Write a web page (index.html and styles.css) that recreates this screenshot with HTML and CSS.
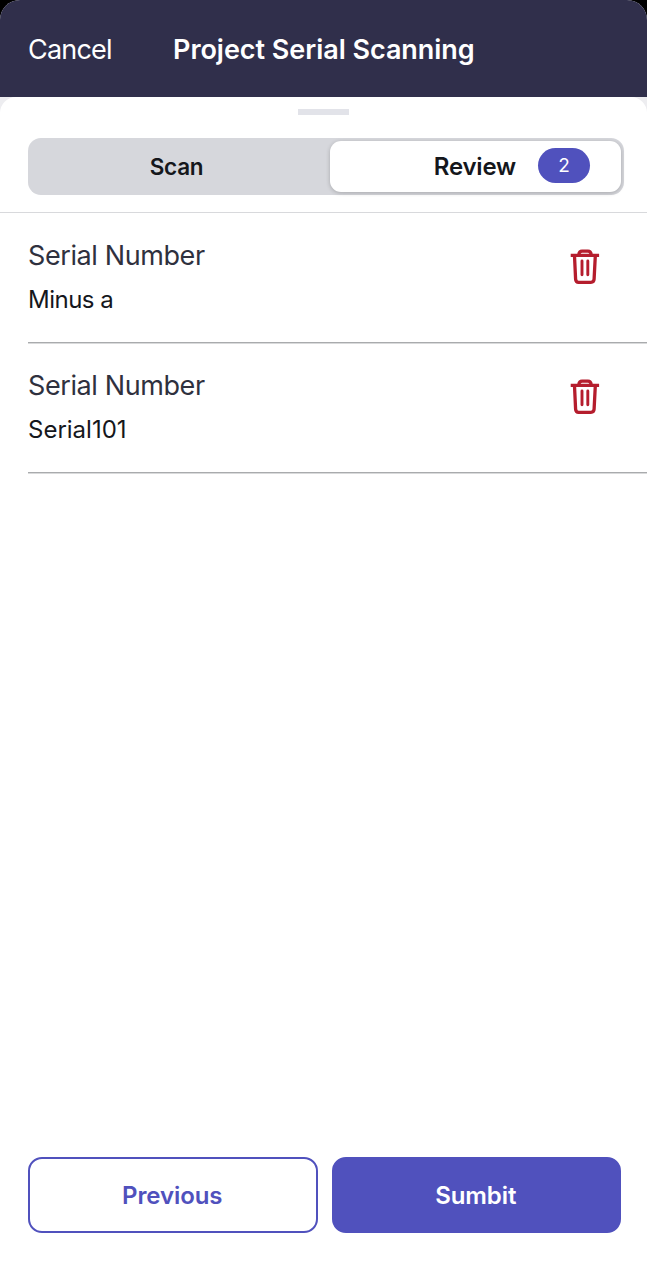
FILE: index.html
```html
<!DOCTYPE html>
<html lang="en">
<head>
<meta charset="utf-8">
<title>Project Serial Scanning</title>
<link rel="stylesheet" href="styles.css">
</head>
<body>
<svg class="symbols" aria-hidden="true">
  <symbol id="trash" viewBox="0 0 30 36">
    <path d="M.7 6.4H29.1M8.8 5.5Q9.2 2.2 12 2.2H18Q20.8 2.2 21.2 5.5M4.5 7L5.6 30.2Q5.8 33.3 8.6 33.3H20.9Q23.9 33.3 24.1 30.2L25.3 7" fill="none" stroke="currentColor" stroke-width="3.3"/>
    <path d="M12 11.9V25.7M17.8 11.9V25.7" fill="none" stroke="currentColor" stroke-width="2.9" stroke-linecap="round"/>
  </symbol>
</svg>
<div class="app">
  <header class="header">
    <a class="cancel">Cancel</a>
    <h1 class="title">Project Serial Scanning</h1>
  </header>
  <main class="sheet">
    <div class="sheet-top">
      <div class="handle"></div>
      <nav class="segments">
        <div class="segment scan">Scan</div>
        <div class="segment active"><span class="review">Review</span><span class="count">2</span></div>
      </nav>
    </div>
    <ul class="list">
      <li class="item">
        <div class="details"><div class="label">Serial Number</div><div class="value minus">Minus a</div></div>
        <svg class="trash"><use href="#trash"/></svg>
      </li>
      <li class="item">
        <div class="details"><div class="label">Serial Number</div><div class="value">Serial101</div></div>
        <svg class="trash"><use href="#trash"/></svg>
      </li>
    </ul>
    <footer class="actions">
      <button class="button secondary">Previous</button>
      <button class="button primary">Sumbit</button>
    </footer>
  </main>
</div>
</body>
</html>
```
FILE: styles.css
```css
* { box-sizing: border-box; }
body { margin: 0; background: #000; font-family: Inter, "Liberation Sans", sans-serif; color: #15171c; }
.symbols { display: none; }
.app { display: flex; flex-direction: column; height: 1280px; overflow: hidden; background: #ededf0; border-radius: 20px 20px 0 0; }
.header { display: flex; align-items: center; flex: none; height: 97px; padding: 2px 28px 0; background: #302f4b; color: #fff; }
.cancel { width: 145px; font-size: 27px; line-height: 34px; font-weight: 400; letter-spacing: -0.8px; }
.title { margin: 0; font-size: 27px; line-height: 34px; font-weight: 600; letter-spacing: -0.04px; white-space: nowrap; }
.sheet { display: flex; flex-direction: column; flex: 1; background: #fff; border-radius: 16px 16px 0 0; }
.sheet-top { height: 116px; padding: 12px 23px 0 28px; border-bottom: 1px solid #d8d9dc; }
.handle { width: 51px; height: 6px; margin-left: 270px; background: #e2e3e9; }
.segments { display: flex; height: 57px; margin-top: 23px; padding: 3px; background: #d6d7dc; border-radius: 13px; }
.segment { display: flex; align-items: center; justify-content: center; flex: 1; font-weight: 600; letter-spacing: -0.2px; }
.scan { padding-right: 8px; font-size: 22.5px; letter-spacing: -0.3px; }
.active { flex: none; justify-content: flex-end; width: 291px; padding-right: 31px; background: #fff; border-radius: 11px; box-shadow: 0 1px 4px #00000038; }
.review { font-size: 24px; }
.count { display: flex; align-items: center; justify-content: center; width: 52px; height: 35px; margin: 0 0 3px 22px; background: #5051bd; border-radius: 18px; color: #fff; font-size: 19px; font-weight: 400; }
.list { flex: 1; margin: 0; padding: 0 0 0 28px; list-style: none; }
.item { display: flex; justify-content: space-between; height: 130px; padding: 26px 47px 0 0; border-bottom: 1px solid #a9abad; box-shadow: 0 1px #d9dadb; }
.label { font-size: 27px; line-height: 34px; color: #2f313e; letter-spacing: -0.4px; }
.value { margin-top: 12px; font-size: 24px; line-height: 30px; }
.minus { letter-spacing: -0.5px; }
.trash { width: 30px; height: 36px; margin-top: 10px; color: #b51d2d; }
.actions { display: flex; gap: 14px; height: 123px; padding: 0 26px 47px 28px; }
.button { flex: 1; padding: 2px 1px 0 0; border: 2px solid #5051bd; border-radius: 14px; font: 600 24px/30px Inter, "Liberation Sans", sans-serif; letter-spacing: -0.1px; }
.secondary { background: #fff; color: #5051bd; }
.primary { background: #5051bd; color: #fff; }
```
